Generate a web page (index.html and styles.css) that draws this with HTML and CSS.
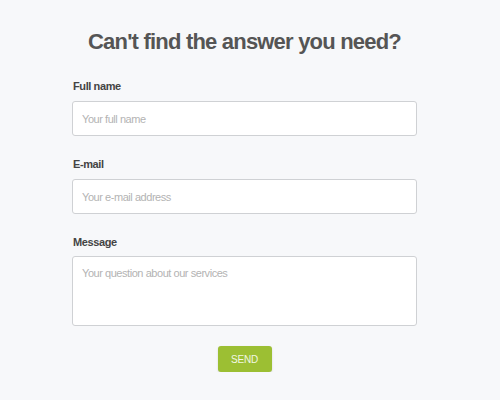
FILE: index.html
```html
<!DOCTYPE html>
<html>
<head>
<meta charset="utf-8">
<link rel="stylesheet" href="styles.css">
</head>
<body>
<div class="page">
  <h1 class="title">Can't find the answer you need?</h1>
  <form class="form">
    <div class="field">
      <label class="label">Full name</label>
      <input class="input" type="text" placeholder="Your full name">
    </div>
    <div class="field">
      <label class="label">E-mail</label>
      <input class="input" type="text" placeholder="Your e-mail address">
    </div>
    <div class="field field-message">
      <label class="label">Message</label>
      <textarea class="input textarea" placeholder="Your question about our services"></textarea>
    </div>
    <div class="actions">
      <button type="button" class="send">SEND</button>
    </div>
  </form>
</div>
</body>
</html>
```
FILE: styles.css
```css
html, body {
  margin: 0;
  padding: 0;
  background: #f7f8fa;
  font-family: "Liberation Sans", Arial, sans-serif;
}
.page {
  width: 345px;
  margin-left: 72px;
  padding-top: 29px;
  display: flex;
  flex-direction: column;
}
.title {
  margin: 0;
  font-size: 22px;
  line-height: 26px;
  font-weight: bold;
  color: #555;
  text-align: center;
  white-space: nowrap;
  letter-spacing: -0.8px;
}
.form {
  margin-top: 25px;
  display: flex;
  flex-direction: column;
  gap: 22px;
}
.field {
  display: flex;
  flex-direction: column;
  gap: 8px;
}
.field-message {
  gap: 7px;
}
.label {
  font-size: 11px;
  line-height: 13px;
  font-weight: bold;
  color: #444;
  padding-left: 1px;
  letter-spacing: -0.4px;
}
.input {
  box-sizing: border-box;
  width: 345px;
  height: 35px;
  margin: 0;
  border: 1px solid #cfd1d4;
  border-radius: 3px;
  background: #fff;
  padding: 0 9px;
  font-family: "Liberation Sans", Arial, sans-serif;
  font-size: 11px;
  letter-spacing: -0.45px;
  color: #444;
  outline: none;
}
.input::placeholder {
  color: #b3b3b3;
}
.textarea {
  height: 70px;
  padding: 10px 9px;
  resize: none;
  display: block;
}
.actions {
  display: flex;
  justify-content: center;
  margin-top: -2px;
}
.send {
  width: 54px;
  height: 26px;
  border: none;
  border-radius: 3px;
  background: #9cbf33;
  color: #f2f7e2;
  font-family: "Liberation Sans", Arial, sans-serif;
  font-size: 10px;
  letter-spacing: -0.2px;
  padding: 0;
  box-shadow: 0 1px 2px rgba(0,0,0,0.15);
}
```
